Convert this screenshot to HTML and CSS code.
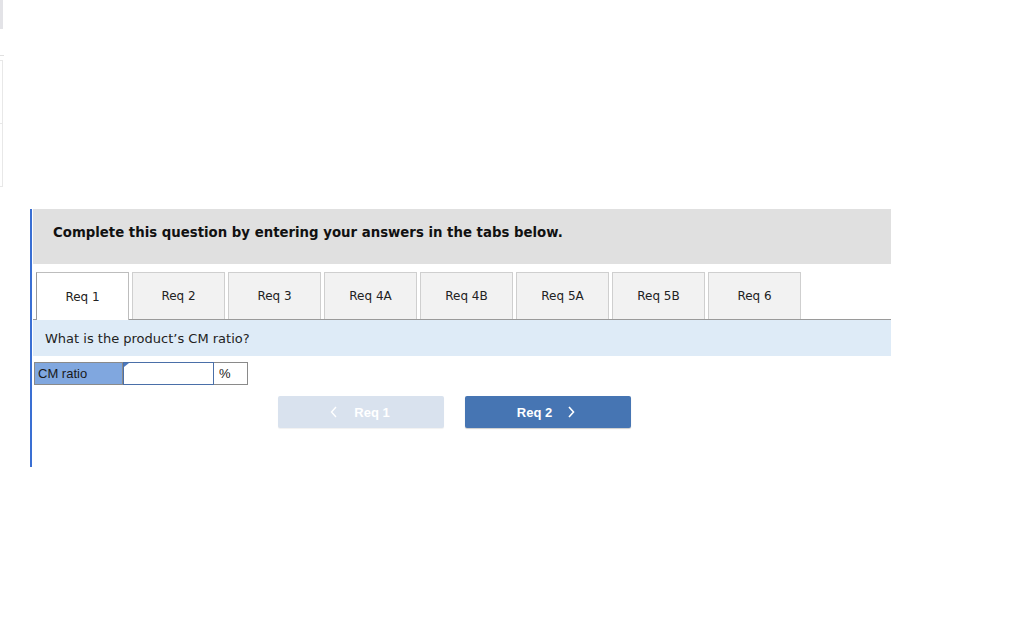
FILE: index.html
```html
<!DOCTYPE html>
<html>
<head>
<meta charset="utf-8">
<link rel="stylesheet" href="styles.css">
</head>
<body>
<div class="frags">
  <div class="frag-bar"></div>
  <div class="frag-line"></div>
  <div class="frag-box">
    <div class="frag-cell"></div>
    <div class="frag-cell"></div>
  </div>
</div>

<div class="main">
  <div class="header">Complete this question by entering your answers in the tabs below.</div>

  <div class="tabs">
    <div class="tab active">Req 1</div>
    <div class="tab">Req 2</div>
    <div class="tab">Req 3</div>
    <div class="tab">Req 4A</div>
    <div class="tab">Req 4B</div>
    <div class="tab">Req 5A</div>
    <div class="tab">Req 5B</div>
    <div class="tab">Req 6</div>
  </div>

  <div class="question">What is the product’s CM ratio?</div>

  <div class="answer-row">
    <div class="cell label">CM ratio</div>
    <div class="cell input"></div>
    <div class="cell unit">%</div>
  </div>

  <div class="nav">
    <div class="btn prev">
      <svg class="chev" width="8" height="12" viewBox="0 0 8 12"><path d="M6 1 L1.5 6 L6 11" fill="none" stroke="#fff" stroke-width="1.4"/></svg>
      <span>Req 1</span>
    </div>
    <div class="btn next">
      <span>Req 2</span>
      <svg class="chev" width="8" height="12" viewBox="0 0 8 12"><path d="M2 1 L6.5 6 L2 11" fill="none" stroke="#fff" stroke-width="1.6"/></svg>
    </div>
  </div>
</div>
</body>
</html>
```

FILE: styles.css
```css
html, body {
  margin: 0;
  padding: 0;
  background: #fff;
}

body {
  font-family: "DejaVu Sans", Verdana, sans-serif;
  color: #222;
}

.frags {
  height: 208px;
}

.frag-bar {
  width: 3px;
  height: 29px;
  background: #e3e3e7;
}

.frag-line {
  margin-top: 26px;
  width: 4px;
  height: 1px;
  background: #e0e0e0;
}

.frag-box {
  margin-top: 4px;
  width: 2px;
  border: 1px solid #e8e8e8;
  border-left: none;
  display: flex;
  flex-direction: column;
}

.frag-cell {
  height: 62px;
}

.frag-cell + .frag-cell {
  border-top: 1px solid #e8e8e8;
}

.main {
  margin-left: 30px;
  width: 861px;
  border-left: 2px solid #3a6fd3;
  padding-left: 1px;
  height: 258px;
  box-sizing: border-box;
}

.header {
  margin-top: 1px;
  height: 55px;
  background: #e0e0e0;
  font-weight: bold;
  font-size: 13.3px;
  line-height: 46px;
  padding-top: 1px;
  padding-left: 20px;
  box-sizing: border-box;
  color: #111;
}

.tabs {
  margin-top: 8px;
  display: flex;
  gap: 3px;
  padding-left: 3px;
  border-bottom: 1px solid #9a9a9a;
  height: 48px;
  box-sizing: border-box;
}

.tab {
  width: 93px;
  height: 47px;
  box-sizing: border-box;
  background: #f2f2f2;
  border: 1px solid #cfcfcf;
  border-bottom: none;
  font-size: 12px;
  display: flex;
  align-items: center;
  justify-content: center;
  color: #222;
}

.tab.active {
  background: #fff;
  border-color: #bdbdbd;
  border-left-color: #9a9a9a;
  height: 48px;
}

.question {
  height: 36px;
  background: #deebf7;
  font-size: 13px;
  padding-left: 12px;
  line-height: 37px;
  color: #222;
}

.answer-row {
  margin-top: 6px;
  margin-left: 1px;
  display: flex;
  height: 23px;
}

.cell {
  box-sizing: border-box;
  height: 23px;
}

.label {
  width: 89px;
  background: #80a7df;
  border: 1px solid #8a8a8a;
  font-family: "Liberation Sans", Arial, sans-serif;
  font-size: 13px;
  line-height: 21px;
  padding-left: 3px;
  color: #1a1a1a;
}

.input {
  width: 91px;
  background: #fff;
  border: 1px solid #4a6fa8;
  position: relative;
}

.input::before {
  content: "";
  position: absolute;
  left: 0;
  top: 0;
  border-left: 5px solid #4a78c0;
  border-bottom: 4px solid transparent;
}

.unit {
  width: 34px;
  border: 1px solid #8a8a8a;
  border-left: none;
  font-family: "Liberation Sans", Arial, sans-serif;
  font-size: 13px;
  line-height: 21px;
  padding-left: 5px;
  color: #1a1a1a;
}

.nav {
  margin-top: 11px;
  padding-left: 245px;
  display: flex;
  gap: 21px;
}

.btn {
  width: 166px;
  height: 32px;
  border-radius: 2px;
  display: flex;
  align-items: center;
  justify-content: center;
  font-family: "Liberation Sans", Arial, sans-serif;
  font-weight: bold;
  font-size: 13px;
  color: #fff;
  box-sizing: border-box;
}

.btn.prev {
  background: #d9e2ee;
  gap: 16px;
  padding-right: 2px;
  box-shadow: 0 1px 1px rgba(0,0,0,0.06);
}

.btn.next {
  background: #4675b3;
  gap: 15px;
  padding-right: 4px;
  box-shadow: 0 1px 1px rgba(0,0,0,0.2);
}

.chev {
  display: block;
}
```
